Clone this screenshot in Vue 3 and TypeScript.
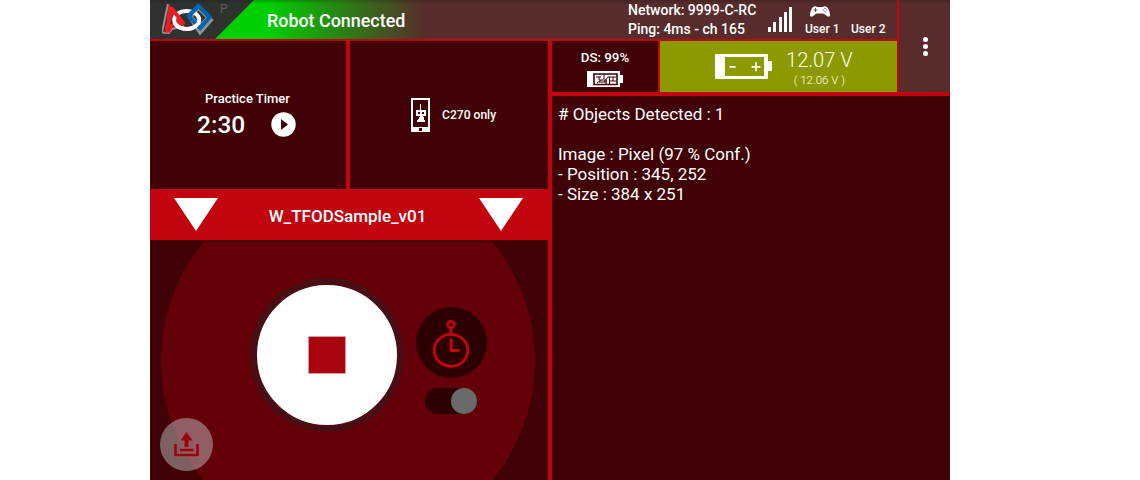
<script setup lang="ts">
import { ref } from 'vue'

const voltage = ref('12.07 V')
const lowest = ref('( 12.06 V )')
const bars: number[] = [5, 10, 15, 20, 25]
const telemetry: string[] = [
  '# Objects Detected : 1',
  '',
  'Image : Pixel (97 % Conf.)',
  '- Position : 345, 252',
  '- Size : 384 x 251',
]
</script>

<template>
  <main class="station">
    <header class="topbar">
      <div class="brand">
        <svg class="logo" width="54" height="34" viewBox="0 0 54 34">
          <path d="M6 1 L0 29.500 L7 30 L10 26 L22 23.500" fill="none" stroke="#929496" stroke-width="2" />
          <path d="M26.500 13 L38 30 L50.500 16" fill="none" stroke="#929496" stroke-width="3" />
          <path d="M30 13.500 L36.500 6.500 L44.500 14.500 L38 22Z" fill="none" stroke="#929496" stroke-width="1.500" />
          <path d="M7 1 L22.500 21.500 L10 25 L8 29.500 L2.500 29.500Z M10 11 L8.500 21 L15 19Z" fill="#ed1c24" fill-rule="evenodd" />
          <ellipse cx="24.700" cy="17" rx="12.600" ry="9" fill="none" stroke="#fff" stroke-width="3.800" />
          <path d="M9 4.500 L22 21.500" stroke="#ed1c24" stroke-width="4" />
          <path d="M26 13.500 L36.500 3 L47.500 14 L37 26.500" fill="none" stroke="#0066b3" stroke-width="4.200" />
          <path d="M26 12.500 L37 24" stroke="#0066b3" stroke-width="4" />
          <path d="M13 20.500 Q16 25.500 24.700 26 Q33 25.500 36.500 20" fill="none" stroke="#fff" stroke-width="3.800" />
        </svg>
        <span class="mode">P</span>
      </div>
      <h1 class="status">Robot Connected</h1>
      <div class="network">
        <span>Network: 9999-C-RC</span>
        <span>Ping: 4ms - ch 165</span>
      </div>
      <div class="signal">
        <i v-for="h in bars" :key="h" :style="{ height: h + 'px' }"></i>
      </div>
      <div class="user user-one">
        <svg width="20" height="11" viewBox="0 0 20 11">
          <path d="M4 .5 Q6-.3 7 1 H13 Q14-.3 16 .5 C18 1 20 6 20 9 C20 11 18 11 17 10 L13.500 7.500 H6.500 L3 10 C2 11 0 11 0 9 C0 6 2 1 4 .5Z" fill="#fff" />
          <path d="M3.5 4h4M5.500 2v4" stroke="#582c2c" stroke-width=".8" />
          <circle cx="15" cy="2.500" r=".6" fill="#582c2c" /><circle cx="15" cy="5.500" r=".6" fill="#582c2c" />
          <circle cx="13.300" cy="4" r=".6" fill="#582c2c" /><circle cx="16.700" cy="4" r=".6" fill="#582c2c" />
        </svg>
        <span>User 1</span>
      </div>
      <div class="user user-two"><span>User 2</span></div>
    </header>

    <button class="menu" aria-label="Menu"><i></i><i></i><i></i></button>

    <section class="left">
      <div class="cards">
        <div class="card timer">
          <span class="caption">Practice Timer</span>
          <div class="clock">
            <span class="time">2:30</span>
            <svg width="25" height="25" viewBox="0 0 25 25">
              <circle cx="12.500" cy="12.500" r="12.200" fill="#fff" />
              <path d="M10 7 V18 L17 12.500Z" fill="#400206" />
            </svg>
          </div>
        </div>
        <div class="card config">
          <svg width="19" height="34" viewBox="0 0 19 34">
            <path d="M0 0H19V34H0Z M2 2V29H17V2Z M8 30V33H11V30Z" fill="#fff" fill-rule="evenodd" />
            <path d="M9 6h1v6h5v6h-3v1h1v3h1v2H6v-2h1v-1h1v-2h1v-1H5v-6h4Z M7 14v2h2v-2Z M11 14v2h2v-2Z" fill="#fff" fill-rule="evenodd" />
          </svg>
          <span>C270 only</span>
        </div>
      </div>

      <div class="opmode">
        <svg width="44" height="33" viewBox="0 0 44 33"><path d="M0 0H44L22 33Z" fill="#fff" /></svg>
        <span>W_TFODSample_v01</span>
        <svg width="44" height="33" viewBox="0 0 44 33"><path d="M0 0H44L22 33Z" fill="#fff" /></svg>
      </div>

      <div class="controls">
        <div class="halo"></div>
        <button class="share" aria-label="Upload">
          <svg width="25" height="25" viewBox="0 0 25 25">
            <path d="M1.500 12V23H23.500V12M6 18H19.500" fill="none" stroke="#9c0410" stroke-width="2.600" stroke-linejoin="round" />
            <path d="M12.500 0 L18.500 8.500H14.500V15H10.500V8.500H6.500Z" fill="#9c0410" />
          </svg>
        </button>
        <button class="stop" aria-label="Stop"><i></i></button>
        <div class="auto">
          <div class="watch">
            <svg width="38" height="50" viewBox="0 0 38 50">
              <g fill="none" stroke="#c2040f" stroke-width="2.800">
                <circle cx="19" cy="5.500" r="3.300" />
                <path d="M19 9V16" />
                <ellipse cx="19" cy="31.300" rx="16.800" ry="16" />
                <path d="M19 21V31.500H26.500" stroke-linecap="round" />
              </g>
            </svg>
          </div>
          <div class="toggle"><i></i></div>
        </div>
      </div>
    </section>

    <section class="right">
      <div class="batteries">
        <div class="ds">
          <span>DS: 99%</span>
          <svg width="36" height="16" viewBox="0 0 36 16">
            <path d="M0 0H33V4H36V12H33V16H0Z" fill="#fff" />
            <path d="M7 3H30V13.500H7Z" fill="none" stroke="#400206" stroke-width="1.600" />
            <path d="M9 6H14M12 6V9H20M10 12L14 9M17 3V8M17 11L21 6H29M22.500 6V13M22.500 10H29M26 6V10M12 11H20M19 9V13" fill="none" stroke="#400206" stroke-width="1" />
          </svg>
        </div>
        <div class="robot">
          <svg width="57" height="25" viewBox="0 0 57 25">
            <path d="M1 0H52Q53 0 53 1V7H56Q57 7 57 8V17H53V24Q53 25 52 25H1Q0 25 0 24V1Q0 0 1 0Z M10 3V22H49V3Z" fill="#fff" fill-rule="evenodd" />
            <path d="M14.500 12.800H20.500M36.500 12.800H45.500M41 8.300V17.300" stroke="#fff" stroke-width="1.700" />
          </svg>
          <div class="volts"><span class="now">{{ voltage }}</span><span class="low">{{ lowest }}</span></div>
        </div>
      </div>
      <div class="telemetry">
        <p v-for="(line, i) in telemetry" :key="i">{{ line }}</p>
      </div>
    </section>
  </main>
</template>

<style scoped>
* { box-sizing: border-box; }
.station {
  width: 800px; height: 480px; margin-left: 150px; overflow: hidden;
  display: grid; grid-template-columns: 400px 349px 51px; grid-template-rows: 39px 51px 386px; row-gap: 2px;
  background: #c2040f; color: #fff; font-family: Roboto, "Liberation Sans", sans-serif; font-weight: 500;
}
button { border: 0; padding: 0; margin: 0; font: inherit; }
svg { display: block; flex: none; }
i { display: block; }
.topbar {
  grid-column: 1 / 3; grid-row: 1; display: flex; width: 747px; height: 39px;
  background: linear-gradient(rgba(0, 0, 0, .2), transparent 4px), linear-gradient(90deg, #00d000 0 118px, #582c2c 275px);
}
.brand { width: 104px; height: 39px; flex: none; display: flex; background: linear-gradient(#282a28, #303230 4px); clip-path: polygon(0 0, 100% 0, 65px 100%, 0 100%); }
.logo { margin: 3px 0 0 12px; }
.mode { margin: 1px 0 0 4px; font-size: 12px; line-height: 16px; font-weight: 400; color: #606260; }
.status { margin: 0 0 0 13px; width: 210px; font-size: 17.9px; line-height: 41px; font-weight: 500; white-space: nowrap; }
.network { margin-left: 151px; width: 140px; font-size: 14px; line-height: 19px; padding-top: 1px; display: flex; flex-direction: column; white-space: nowrap; }
.signal { display: flex; gap: 2.25px; align-items: flex-end; width: 24px; height: 32px; }
.signal i { width: 3px; background: #fff; }
.user { display: flex; flex-direction: column; justify-content: flex-end; height: 36px; font-size: 12px; line-height: 14px; white-space: nowrap; }
.user-one { margin-left: 13px; width: 46px; }
.user-one svg { margin: 0 0 5px 5px; }
.menu { grid-column: 3; grid-row: 1 / 3; padding-left: 2px; background: linear-gradient(rgba(0, 0, 0, .2), transparent 4px), #582c2c; display: flex; flex-direction: column; align-items: center; justify-content: center; gap: 2px; }
.menu i { width: 5px; height: 5px; border-radius: 50%; background: #fff; }
.left { grid-column: 1; grid-row: 2 / 4; width: 398px; }
.cards { display: grid; grid-template-columns: 196px 198px; gap: 4px; height: 148px; }
.card { background: #400206; }
.timer { padding-top: 50px; }
.caption { display: block; padding-left: 55px; font-size: 13px; line-height: 16px; }
.clock { display: flex; align-items: center; gap: 26px; padding-left: 47px; margin-top: 3px; }
.clock svg { margin-top: -2px; }
.time { font-size: 24.500px; line-height: 30px; }
.config { display: flex; align-items: flex-start; padding: 57px 0 0 61px; gap: 12px; font-size: 12.100px; line-height: 34px; }
.opmode { height: 51px; display: flex; justify-content: space-between; align-items: center; padding: 0 25px 0 24px; font-size: 17px; }
.opmode span { padding: 3px 2px 0 0; }
.controls { height: 240px; background: #400206; position: relative; overflow: hidden; display: flex; border-top: 2px solid #400206; }
.halo { position: absolute; left: 11px; top: -68px; width: 374px; height: 374px; border-radius: 50%; background: #640008; }
.share { position: relative; margin: 176px 0 0 10px; width: 53px; height: 53px; border-radius: 50%; background: rgba(190, 190, 190, .5); display: flex; align-items: center; justify-content: center; flex: none; }
.stop { position: relative; margin: 36px 0 0 37px; width: 154px; height: 154px; border-radius: 50%; background: #fff; border: 7px solid #480e14; display: flex; align-items: center; justify-content: center; flex: none; }
.stop i { width: 38px; height: 38px; background: #a8040e; border: 1px solid #dc9ca0; }
.auto { position: relative; margin: 65px 0 0 12px; display: flex; flex-direction: column; align-items: flex-start; }
.watch { width: 71px; height: 71px; border-radius: 50%; background: #2c0002; padding: 12px 0 0 16px; }
.toggle { width: 52px; height: 26px; margin: 10px 0 0 9px; border-radius: 13px; background: #2c0002; display: flex; justify-content: flex-end; }
.toggle i { width: 26px; height: 26px; border-radius: 50%; background: #6a6a6a; }
.right { display: contents; }
.batteries { grid-column: 2; grid-row: 2; margin-left: 2px; width: 345px; display: flex; gap: 2px; height: 51px; }
.ds { width: 106px; background: #400206; display: flex; flex-direction: column; align-items: center; padding-top: 8px; font-size: 13.300px; line-height: 17px; }
.ds svg { margin-top: 5px; }
.robot { width: 237px; background: #8c9a00; display: flex; padding: 13px 0 0 55px; }
.volts { margin: -6px 0 0 14px; display: flex; flex-direction: column; align-items: center; font-weight: 300; }
.now { font-size: 20.100px; line-height: 24px; }
.low { font-size: 11.500px; line-height: 17px; }
.telemetry { grid-column: 2 / 4; grid-row: 3; margin: 2px 0 0 2px; background: #400206; padding: 8px 6px; font-size: 17px; line-height: 20px; font-weight: 400; }
.telemetry p { margin: 0; height: 20px; }
</style>
